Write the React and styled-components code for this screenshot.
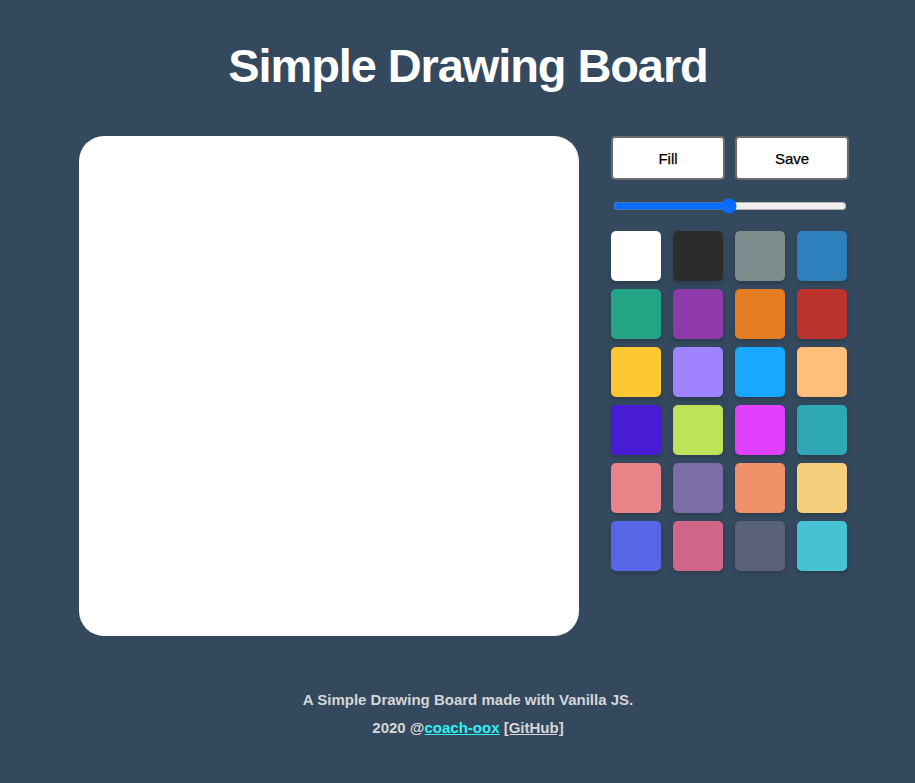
import React from "react";
import styled, { createGlobalStyle } from "styled-components";

const GlobalStyle = createGlobalStyle`
  html, body {
    margin: 0;
    padding: 0;
    background: #34495e;
  }
  body {
    font-family: "Liberation Sans", Arial, sans-serif;
  }
`;

const Page = styled.div`
  min-height: 783px;
  display: flex;
  flex-direction: column;
  align-items: center;
  padding-left: 13px;
  box-sizing: border-box;
`;

const Title = styled.h1`
  margin: 0 0 0 8px;
  padding-top: 42px;
  font-size: 47px;
  line-height: 47px;
  font-weight: 700;
  color: white;
  letter-spacing: -1.1px;
`;

const Main = styled.main`
  margin-top: 47px;
  display: flex;
  gap: 32px;
  align-items: flex-start;
`;

const Canvas = styled.canvas`
  width: 500px;
  height: 500px;
  background: white;
  border-radius: 25px;
  display: block;
`;

const Controls = styled.div`
  width: 238px;
  display: flex;
  flex-direction: column;
`;

const Buttons = styled.div`
  display: flex;
  gap: 10px;
`;

const Button = styled.button`
  flex: 1;
  height: 44px;
  background: white;
  border: 2px solid #6b6b6b;
  border-radius: 4px;
  font-family: "Liberation Sans", Arial, sans-serif;
  font-size: 15px;
  font-weight: 400;
  color: black;
  cursor: pointer;
  -webkit-text-stroke: 0.25px black;
`;

const Range = styled.input`
  width: 234px;
  margin: 18px 2px 17px 2px;
  accent-color: #0a6cff;
`;

const Palette = styled.div`
  display: grid;
  grid-template-columns: repeat(4, 50px);
  column-gap: 12px;
  row-gap: 8px;
`;

const Swatch = styled.div`
  width: 50px;
  height: 50px;
  border-radius: 5px;
  background: ${(p) => p.$color};
  box-shadow: 0 2px 4px rgba(0, 0, 0, 0.2);
  cursor: pointer;
`;

const Footer = styled.footer`
  margin: 50px 0 0 8px;
  text-align: center;
  color: #d6d6d6;
  font-size: 15px;
  font-weight: 700;
  line-height: 28px;
  a {
    color: #d6d6d6;
  }
  a.author {
    color: #2ff3f3;
  }
`;

const colors = [
  "#ffffff", "#2c2c2c", "#7f8c8d", "#2e80bc",
  "#22a485", "#8e3aab", "#e67d24", "#bc322d",
  "#fdc832", "#a083ff", "#1aa8ff", "#ffbf7b",
  "#471cd4", "#bee35b", "#e040fb", "#2da8b4",
  "#e88487", "#7b6ea6", "#f09069", "#f5cf7c",
  "#5767e8", "#d06688", "#586175", "#46c2d5",
];

export default function App() {
  return (
    <>
      <GlobalStyle />
      <Page>
        <Title>Simple Drawing Board</Title>
        <Main>
          <Canvas width={500} height={500} />
          <Controls>
            <Buttons>
              <Button>Fill</Button>
              <Button>Save</Button>
            </Buttons>
            <Range type="range" min="0.1" max="10" step="0.1" defaultValue="5" />
            <Palette>
              {colors.map((c) => (
                <Swatch key={c} $color={c} />
              ))}
            </Palette>
          </Controls>
        </Main>
        <Footer>
          <div>A Simple Drawing Board made with Vanilla JS.</div>
          <div>
            2020 @<a className="author" href="#">coach-oox</a>{" "}
            <a href="#">[GitHub]</a>
          </div>
        </Footer>
      </Page>
    </>
  );
}
